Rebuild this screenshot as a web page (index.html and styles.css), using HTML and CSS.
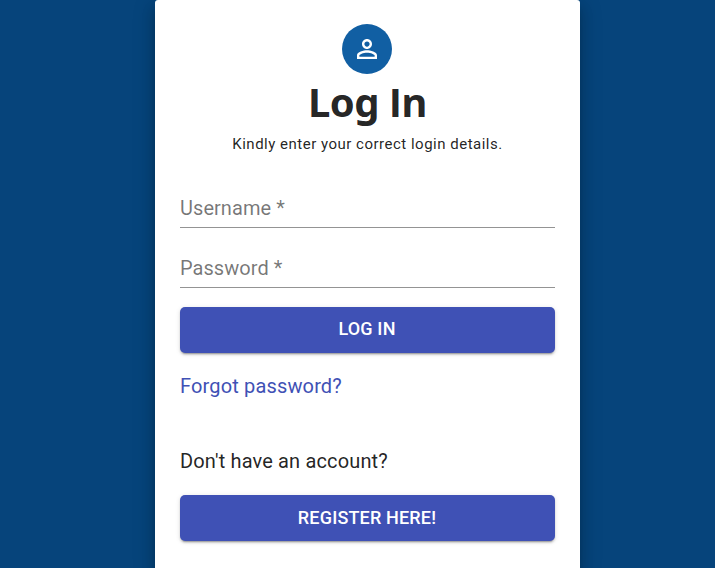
FILE: index.html
```html
<!DOCTYPE html>
<html lang="en">
<head>
<meta charset="utf-8">
<title>Log In</title>
<link rel="stylesheet" href="styles.css">
</head>
<body>
<main class="card">
  <div class="avatar">
    <svg viewBox="0 0 24 24" width="30" height="30" fill="currentColor"><path d="M12 5.9c1.16 0 2.1.94 2.1 2.1s-.94 2.1-2.1 2.1S9.900 9.160 9.900 8s.94-2.100 2.100-2.100m0 9c2.970 0 6.100 1.460 6.100 2.100v1.100H5.900V17c0-.64 3.130-2.100 6.100-2.100M12 4C9.790 4 8 5.790 8 8s1.790 4 4 4 4-1.790 4-4-1.790-4-4-4zm0 9c-2.670 0-8 1.340-8 4v3h16v-3c0-2.660-5.330-4-8-4z"/></svg>
  </div>
  <h1 class="title"><span class="title-start">Log</span> In</h1>
  <p class="subtitle">Kindly enter your correct login details.</p>
  <form class="form">
    <label class="field">Username *</label>
    <label class="field">Password *</label>
    <button class="button" type="button">LOG IN</button>
  </form>
  <a class="forgot">Forgot password?</a>
  <p class="prompt">Don't have an account?</p>
  <button class="button" type="button">REGISTER HERE!</button>
</main>
</body>
</html>
```
FILE: styles.css
```css
* { box-sizing: border-box; }
body {
  margin: 0;
  height: 568px;
  overflow: hidden;
  background: #06447b;
  font-family: Roboto, sans-serif;
  color: rgba(0, 0, 0, 0.87);
}
.card {
  display: flex;
  flex-direction: column;
  width: 425px;
  height: 568px;
  margin: 0 0 0 155px;
  padding: 24px 25px 0;
  background: #fff;
  border-radius: 3px 3px 0 0;
  box-shadow: 0 6px 6px -3px rgba(0,0,0,.2), 0 10px 14px 1px rgba(0,0,0,.14), 0 4px 22px 3px rgba(0,0,0,.12);
}
.avatar {
  display: flex;
  align-items: center;
  justify-content: center;
  align-self: center;
  flex: none;
  width: 50px;
  height: 50px;
  margin-right: 1px;
  border-radius: 50%;
  background: #115fa3;
  color: #fff;
}
.title {
  margin: 4px 0 0;
  height: 48px;
  font: 700 40px/48px "Open Sans", sans-serif;
  letter-spacing: -0.6px;
  text-align: center;
}
.title-start { font-family: "Noto Sans", sans-serif; }
.subtitle {
  margin: 7px 0 0;
  font-size: 15px;
  line-height: 22px;
  letter-spacing: 0.5px;
  text-align: center;
}
.form { display: flex; flex-direction: column; margin-top: 33px; }
.field {
  height: 40px;
  margin-bottom: 20px;
  border-bottom: 1px solid rgba(0,0,0,.42);
  color: rgba(0,0,0,.54);
  font-size: 20px;
  line-height: 40px;
  letter-spacing: 0.05px;
}
.button {
  flex: none;
  width: 100%;
  height: 46px;
  padding: 0 1px 0 0;
  border: 0;
  border-radius: 5px;
  background: #3f51b5;
  color: #fff;
  font: 500 18px/44px Roboto, sans-serif;
  letter-spacing: 0.17px;
  box-shadow: 0 3px 1px -2px rgba(0,0,0,.2), 0 2px 2px rgba(0,0,0,.14), 0 1px 5px rgba(0,0,0,.12);
}
.form .button { margin-top: -1px; padding-bottom: 2px; }
.forgot, .prompt { font-size: 20px; line-height: 30px; letter-spacing: 0.15px; }
.forgot { margin-top: 18px; color: #3f51b5; }
.prompt { margin: 45px 0 19px; }
```
